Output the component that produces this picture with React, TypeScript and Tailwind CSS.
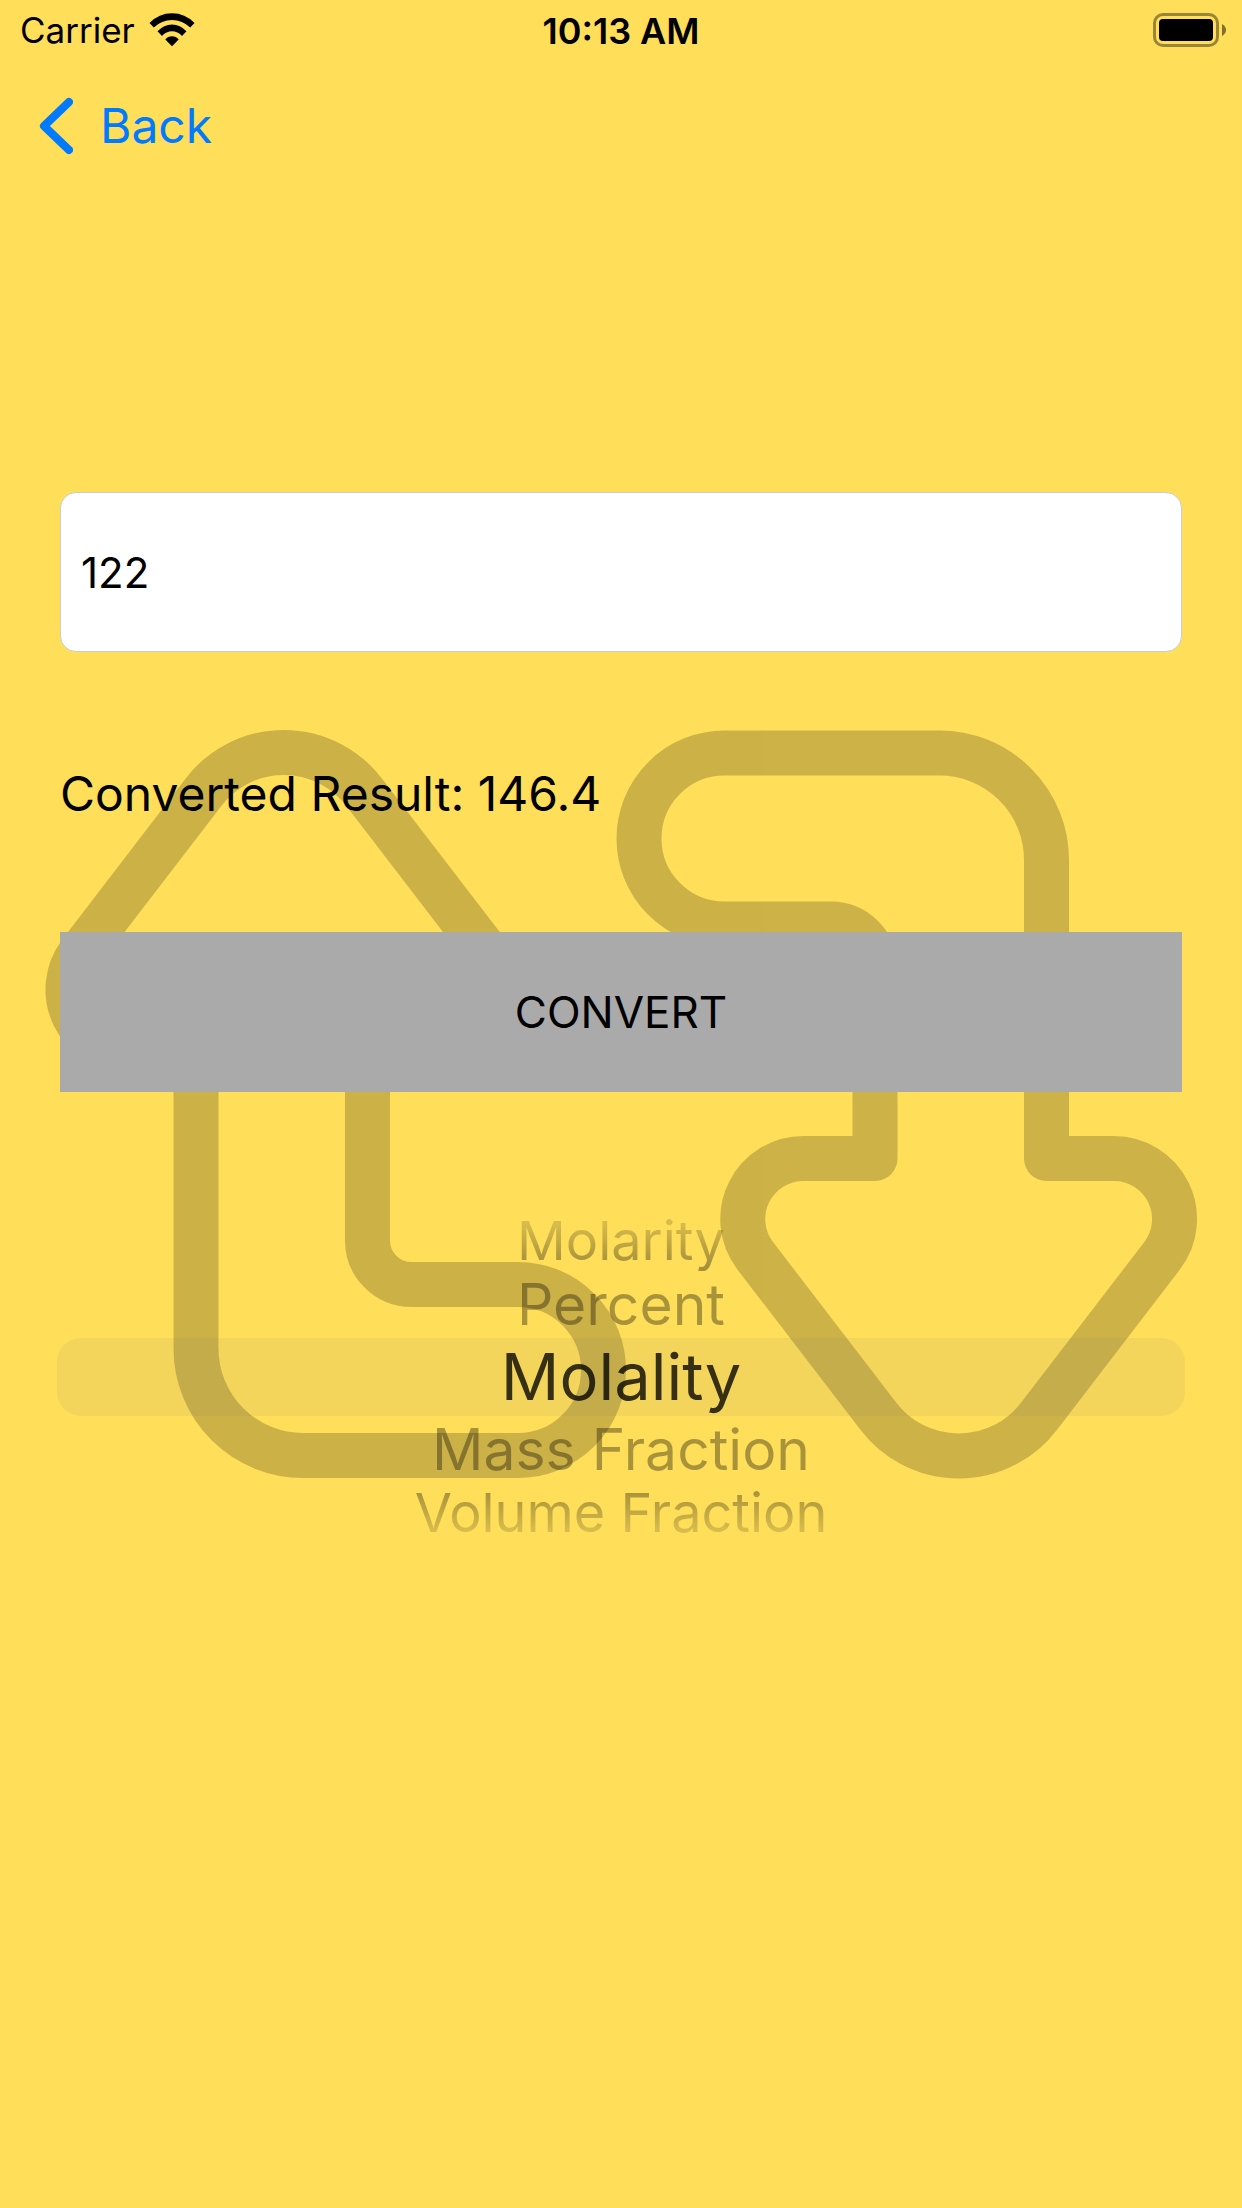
import { useState } from "react";
import clsx from "clsx";

const units = ["Molarity", "Percent", "Molality", "Mass Fraction", "Volume Fraction"];

// Downward arrow of the background artwork; the upward one is this path turned by 180 degrees.
const ARROW =
  "M875 1158.5 V968 A44 44 0 0 0 831 924 H724.5 A85.5 85.5 0 0 1 724.5 753 H939.5 A107 107 0 0 1 1046.5 860 V1158.5 H1114 A60.5 60.5 0 0 1 1162.3 1255.5 L1039.4 1415.8 A101 101 0 0 1 878 1415.8 L755 1255.5 A60.5 60.5 0 0 1 803.5 1158.5 Z";

function Artwork() {
  return (
    <svg
      aria-hidden="true"
      viewBox="0 0 1242 2208"
      className="pointer-events-none absolute inset-0 h-full w-full"
    >
      <g fill="none" stroke="#000" strokeWidth="45" strokeLinejoin="round" opacity="0.195">
        <path d={ARROW} />
        <path d={ARROW} transform="rotate(180 621.25 1104.25)" />
      </g>
    </svg>
  );
}

function Wifi() {
  return (
    <svg aria-label="Wi-Fi" role="img" viewBox="0 0 46 34" className="h-[34px] w-[46px]">
      <path d="M0.5 10 Q10 0.3 23 0.3 Q36 0.3 45.5 10 L41.2 14.6 Q33.5 7 23 7 Q12.5 7 4.8 14.6 Z" />
      <path d="M8.5 18.3 Q14.8 11.4 23 11.4 Q31.2 11.4 37.5 18.3 L33 22.9 Q28.7 18.3 23 18.3 Q17.3 18.3 13 22.9 Z" />
      <path d="M16.3 26.5 Q19 23.3 23 23.3 Q27 23.3 29.7 26.5 L23 33.3 Z" />
    </svg>
  );
}

function Battery() {
  return (
    <svg aria-label="Battery full" role="img" viewBox="0 0 74 34" className="h-[34px] w-[74px]">
      <rect x="1.5" y="1.5" width="63" height="31" rx="8.5" fill="none" stroke="#000" strokeWidth="3" opacity="0.4" />
      <rect x="6" y="6" width="54" height="22" rx="4" />
      <path d="M69 11 Q73 13.5 73 17 Q73 20.5 69 23 Z" opacity="0.5" />
    </svg>
  );
}

function rowStyle(offset: number) {
  if (offset === 0) return "h-[78px] text-[65px] text-black/78";
  if (Math.abs(offset) === 1) return "h-[67px] text-[57px] text-black/34";
  return clsx(
    "h-[60px] bg-clip-text text-[54px] leading-[60px] text-transparent",
    offset < 0
      ? "bg-linear-to-b from-black/15 from-20% to-black/35 to-90%"
      : "bg-linear-to-b from-black/35 from-10% to-black/15 to-80%",
  );
}

export default function App() {
  const [value, setValue] = useState("122");
  const [result, setResult] = useState("146.4");
  const [selected, setSelected] = useState(2);

  const convert = () => {
    const n = Number(value);
    setResult(Number.isFinite(n) ? String(Number((n * 1.2).toFixed(4))) : "0");
  };

  return (
    <div className="relative min-h-screen bg-[#ffde59] font-['Inter',sans-serif] text-black">
      <Artwork />
      <div className="relative">
        <header className="grid h-[60px] grid-cols-3 items-center px-[15px]">
          <div className="flex items-center gap-3.5 pl-[5px] text-[35px]">
            <span>Carrier</span>
            <Wifi />
          </div>
          <time className="pt-0.5 text-center text-[36px] font-semibold">10:13 AM</time>
          <div className="flex justify-end">
            <Battery />
          </div>
        </header>

        <nav className="flex h-[132px] items-start px-[39px] pt-8">
          <button type="button" className="flex items-center gap-[27px] text-[48px] leading-[68px] text-[#007aff]">
            <svg aria-hidden="true" viewBox="0 0 34 58" className="h-[58px] w-[34px]">
              <path d="M30 5 L5 29 L30 53" fill="none" stroke="currentColor" strokeWidth="8" strokeLinecap="round" strokeLinejoin="round" />
            </svg>
            Back
          </button>
        </nav>

        <main className="flex flex-col px-[60px] pt-[300px]">
          <input
            aria-label="Value to convert"
            inputMode="decimal"
            value={value}
            onChange={(e) => setValue(e.target.value)}
            className="h-40 w-full rounded-2xl border border-[#cccccc] bg-white px-5 text-[42px] outline-none"
          />
          <output className="mt-[107px] text-[48px] leading-[70px]">Converted Result: {result}</output>
          <button type="button" onClick={convert} className="mt-[103px] h-40 w-full bg-[#aaaaaa] text-[44px]">
            CONVERT
          </button>

          <div role="radiogroup" aria-label="Unit" className="-mx-[3px] mt-[119px] flex flex-col">
            {units.map((unit, i) => (
              <label
                key={unit}
                className={clsx(
                  "relative flex cursor-pointer items-center justify-center rounded-3xl",
                  i === selected && "bg-[#747480]/8",
                )}
              >
                <input
                  type="radio"
                  name="unit"
                  className="absolute inset-0 cursor-pointer opacity-0"
                  checked={i === selected}
                  onChange={() => setSelected(i)}
                />
                <span className={clsx("flex items-center", rowStyle(i - selected))}>{unit}</span>
              </label>
            ))}
          </div>
        </main>
      </div>
    </div>
  );
}
